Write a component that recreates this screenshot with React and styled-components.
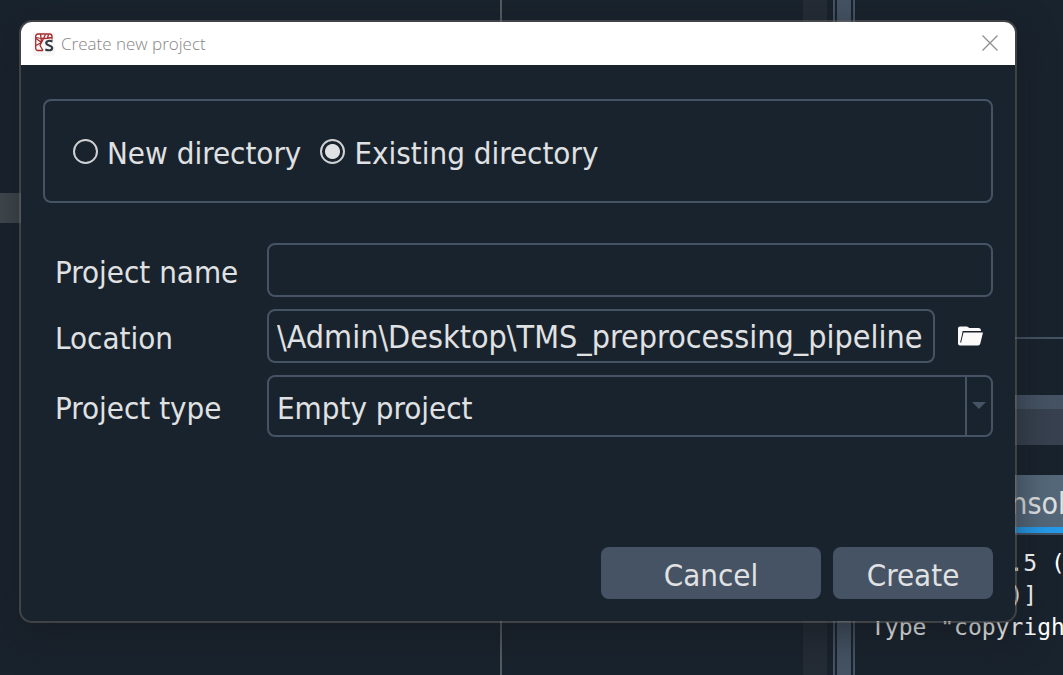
import React, { useState } from 'react';
import styled, { createGlobalStyle } from 'styled-components';

const color = {
  base: '#19232d',
  line: '#455364',
  text: '#e0e1e3',
  pane: '#37414f',
};

const uiFont = '"DejaVu Sans Condensed", "DejaVu Sans", sans-serif';

const GlobalStyle = createGlobalStyle`
  *, *::before, *::after { box-sizing: border-box; }
  body { margin: 0; background: ${color.base}; color: ${color.text}; font-family: ${uiFont}; }
`;

const Desktop = styled.div`
  display: grid;
  grid-template-columns: minmax(0, 1fr);
  grid-template-rows: minmax(0, 1fr);
  min-height: 100vh;
  overflow: hidden;
`;

/* main window behind the dialog */
const Ide = styled.div`
  grid-area: 1 / 1;
  display: grid;
  grid-template-columns: minmax(0, 500fr) minmax(0, 355fr) minmax(0, 208fr);
  height: 100vh;
`;

const FilePane = styled.div`
  padding-top: 193px;
`;

const SelectedRow = styled.div`
  height: 30px;
  background: #41484e;
`;

const EditorPane = styled.div`
  display: flex;
  justify-content: flex-end;
  border-left: 2px solid #575c61;
`;

const EditorScroll = styled.div`
  width: 24px;
  margin-right: 6px;
  background: #242c36;
`;

const Splitter = styled.div`
  width: 22px;
  padding: 0 2px;
  border: solid ${color.line};
  border-width: 0 2px;
  background: ${color.line} content-box;
`;

const SidePane = styled.div`
  display: flex;
  flex-direction: column;
  min-width: 0;
  overflow: hidden;
`;

const HelpArea = styled.div`
  height: 339px;
  margin-bottom: 56px;
  border-bottom: 2px solid ${color.line};
`;

const PaneHeader = styled.div`
  height: 50px;
  margin-bottom: 30px;
  border-top: 14px solid ${color.line};
  background: ${color.pane};
`;

const ConsoleTab = styled.div`
  height: 58px;
  padding-left: 120px;
  border-bottom: 6px solid #259ae9;
  background: #54687a;
  font-size: 30px;
  line-height: 58px;
  white-space: nowrap;
`;

const ConsoleText = styled.pre`
  margin: 0;
  padding: 12px 0 0 16px;
  border-top: 2px solid ${color.line};
  font: 23px/32px "DejaVu Sans Mono", monospace;
  color: #fff;
`;

const Dialog = styled.form`
  grid-area: 1 / 1;
  z-index: 1;
  display: flex;
  flex-direction: column;
  margin: 20px 46px 52px 19px;
  border: 2px solid rgba(104, 101, 96, 0.5);
  border-radius: 13px;
  background: ${color.base} padding-box;
  box-shadow: 0 12px 36px rgba(20, 22, 28, 0.5);
  overflow: hidden;
`;

const TitleBar = styled.header`
  display: flex;
  align-items: center;
  height: 43px;
  padding: 0 14px 0 12px;
  background: #fff;
`;

const Title = styled.h1`
  flex: 1;
  margin: 0 0 0 6px;
  color: #868686;
  font: 300 17px/24px "Open Sans", "Noto Sans", sans-serif;
`;

const IconButton = styled.button`
  display: grid;
  place-items: center;
  width: ${(p) => p.$width}px;
  padding: 0;
  border: 0;
  background: none;
`;

const Body = styled.div`
  flex: 1;
  display: flex;
  flex-direction: column;
  padding: 34px 22px 22px;
`;

const ChoiceBox = styled.fieldset`
  display: flex;
  align-items: center;
  gap: 19px;
  margin: 0 0 40px;
  padding: 30px 28px;
  border: 2px solid ${color.line};
  border-radius: 8px;
`;

const Choice = styled.label`
  display: flex;
  align-items: center;
  gap: 9px;
`;

const ChoiceText = styled.span`
  padding-top: 4px;
  font-size: 31px;
  line-height: 36px;
`;

const Radio = styled.input`
  appearance: none;
  width: 25px;
  height: 25px;
  margin: 0;
  border: 2px solid #cfd1d3;
  border-radius: 50%;

  &:checked {
    background: radial-gradient(circle, ${color.text} 7px, transparent 8px);
  }
`;

const Fields = styled.div`
  display: grid;
  grid-template-columns: 212px minmax(0, 1fr);
  row-gap: 12px;
  align-items: center;
  padding-left: 12px;
`;

const FieldLabel = styled.label`
  padding-top: 4px;
  font-size: 31px;
  line-height: 36px;
`;

const FieldRow = styled.div`
  display: flex;
  gap: 12px;
`;

const TextBox = styled.input`
  flex: 1;
  min-width: 0;
  height: 54px;
  padding: 2px 8px 0;
  border: 2px solid ${color.line};
  border-radius: 8px;
  background: ${color.base};
  color: ${color.text};
  font: 32px/40px ${uiFont};
  outline: 0;
`;

const SelectFrame = styled.div`
  display: grid;
  grid-template-columns: minmax(0, 1fr) 26px;
  height: 62px;
  border: 2px solid ${color.line};
  border-radius: 8px;
`;

const Select = styled.select`
  grid-area: 1 / 1 / 2 / 3;
  appearance: none;
  padding: 4px 34px 0 8px;
  border: 0;
  background: none;
  color: ${color.text};
  font: 31px/40px ${uiFont};
  outline: 0;
`;

const SelectArrow = styled.span`
  grid-area: 1 / 2;
  display: grid;
  place-items: center;
  border-left: 2px solid ${color.line};
  pointer-events: none;
`;

const Actions = styled.footer`
  display: flex;
  justify-content: flex-end;
  gap: 12px;
  margin-top: auto;
`;

const ActionButton = styled.button`
  width: ${(p) => p.$width}px;
  height: 52px;
  padding: 4px 0 0;
  border: 0;
  border-radius: 8px;
  background: ${color.line};
  color: ${color.text};
  font: 31px/40px ${uiFont};
`;

const SpyderLogo = () => (
  <svg width="22" height="24" viewBox="0 0 22 24" fill="none" aria-hidden="true">
    <rect width="22" height="24" rx="3" fill="#f7f7f7" />
    <g stroke="#a82c2e" strokeWidth="1.3" strokeLinejoin="round">
      <path d="M10 18.500H5Q2.700 18.500 2.700 16V4.500Q2.700 2 5 2H16.500Q19 2 19 4.500V7.500" />
      <path d="M3 5.500Q10 7.500 19 5.500M7.500 2L8.500 10.500M3 6.500L8.500 10.500L12.500 2.500M3 13.500L8.500 10.500M8.500 10.500L7 13.500L10 18.500M15.500 2.500L14.500 6" />
    </g>
    <path d="M19.500 9.500C16.500 8.200 13.200 8.700 13.200 11.100C13.200 14 19.200 12.900 19.200 15.900C19.200 18.600 15.500 18.800 12.300 17.500" stroke="#333a40" strokeWidth="2.100" />
  </svg>
);

const CloseIcon = () => (
  <svg width="16" height="18" viewBox="0 0 16 18" aria-hidden="true">
    <path d="M0.500 0.500L15.500 15.500M15.500 0.500L0.500 15.500" stroke="#8f8f8f" strokeWidth="1.300" />
  </svg>
);

const FolderIcon = () => (
  <svg width="25" height="20" viewBox="0 0 25 20" aria-hidden="true">
    <path fill="#fafafa" d="M2 0.500H9L11.500 2H20.500Q23 2.200 23 5H4.500V12L3.200 16L3 17.500L5.200 6.500H25L22.300 17.500Q21.700 19.500 20 19.500H2Q0 19.500 0 17.500V2.500Q0 0.500 2 0.500Z" />
    <path d="M5 6.500L2.600 16.500" stroke={color.base} strokeWidth="1" />
  </svg>
);

export default function App() {
  const [mode, setMode] = useState('existing');
  const [name, setName] = useState('');
  const [location, setLocation] = useState('\\Admin\\Desktop\\TMS_preprocessing_pipeline');

  return (
    <Desktop>
      <GlobalStyle />
      <Ide>
        <FilePane>
          <SelectedRow />
        </FilePane>
        <EditorPane>
          <EditorScroll />
          <Splitter />
        </EditorPane>
        <SidePane>
          <HelpArea />
          <PaneHeader />
          <ConsoleTab>Console 1/A</ConsoleTab>
          <ConsoleText>{'Python 3.8.5 (default\nbit (AMD64)]\nType "copyright"'}</ConsoleText>
        </SidePane>
      </Ide>

      <Dialog role="dialog" aria-labelledby="dialog-title" onSubmit={(e) => e.preventDefault()}>
        <TitleBar>
          <SpyderLogo />
          <Title id="dialog-title">Create new project</Title>
          <IconButton type="button" $width={22} aria-label="Close">
            <CloseIcon />
          </IconButton>
        </TitleBar>
        <Body>
          <ChoiceBox aria-label="Directory">
            <Choice>
              <Radio type="radio" name="mode" checked={mode === 'new'} onChange={() => setMode('new')} />
              <ChoiceText>New directory</ChoiceText>
            </Choice>
            <Choice>
              <Radio type="radio" name="mode" checked={mode === 'existing'} onChange={() => setMode('existing')} />
              <ChoiceText>Existing directory</ChoiceText>
            </Choice>
          </ChoiceBox>

          <Fields>
            <FieldLabel htmlFor="name">Project name</FieldLabel>
            <FieldRow>
              <TextBox id="name" value={name} onChange={(e) => setName(e.target.value)} />
            </FieldRow>
            <FieldLabel htmlFor="location">Location</FieldLabel>
            <FieldRow>
              <TextBox id="location" value={location} onChange={(e) => setLocation(e.target.value)} />
              <IconButton type="button" $width={46} aria-label="Browse">
                <FolderIcon />
              </IconButton>
            </FieldRow>
            <FieldLabel htmlFor="type">Project type</FieldLabel>
            <SelectFrame>
              <Select id="type">
                <option>Empty project</option>
              </Select>
              <SelectArrow>
                <svg width="14" height="8" viewBox="0 0 14 8" aria-hidden="true">
                  <path d="M0 0H14L7 7Z" fill={color.line} />
                </svg>
              </SelectArrow>
            </SelectFrame>
          </Fields>

          <Actions>
            <ActionButton type="button" $width={220}>Cancel</ActionButton>
            <ActionButton type="submit" $width={160}>Create</ActionButton>
          </Actions>
        </Body>
      </Dialog>
    </Desktop>
  );
}
